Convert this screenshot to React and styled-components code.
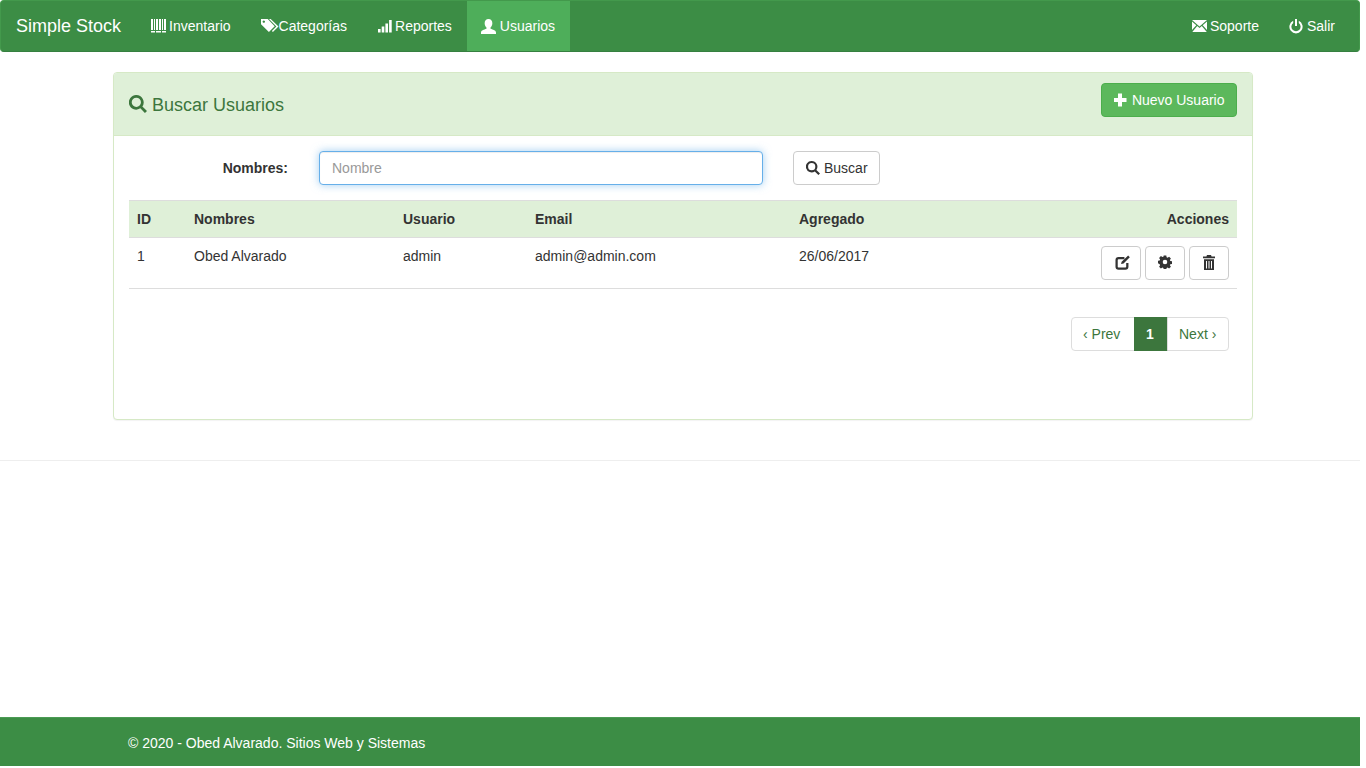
import React from "react";
import styled, { createGlobalStyle } from "styled-components";

const GlobalStyle = createGlobalStyle`
  html, body {
    margin: 0;
    background: #fff;
  }
  body {
    font-family: "Liberation Sans", Arial, sans-serif;
    font-size: 14px;
    line-height: 20px;
    color: #333;
  }
`;

const Svg = styled.svg`
  display: inline-block;
  flex: none;
  fill: currentColor;
  margin-left: ${(p) => p.$shift ?? 0}px;
`;

const Outline = styled.path`
  fill: none;
  stroke: currentColor;
  stroke-width: 2.1px;
`;

const IconBarcode = () => (
  <Svg width="15" height="16" viewBox="0 0 15 16">
    <path d="M0 1h2v11H0zM3 1h1v11H3zM5 1h2v11H5zM8 1h2v11H8zM11 1h1v11h-1zM13 1h2v11h-2zM0 13h4v1.500H0zM5 13h5v1.500H5zM11 13h4v1.500h-4z" />
  </Svg>
);

const IconTags = () => (
  <Svg width="18" height="16" viewBox="0 0 18 16">
    <path d="M0 1h6.700l7 7.200-5.800 5.800L0 6.300zM2.800 2.400a1.200 1.200 0 1 0 .01 0z" fillRule="evenodd" />
    <path d="M8 1h1.700l7.800 7.400-5.600 5.700-1-1 4.500-4.700z" />
  </Svg>
);

const IconSignal = () => (
  <Svg width="15" height="14" viewBox="-1 0 15 14">
    <path d="M0 10h2.600v3.500H0zM3.700 7.500h2.600v6H3.700zM7.400 4.500H10v9H7.400zM11.100 1h2.600v12.500h-2.600z" />
  </Svg>
);

const IconUser = () => (
  <Svg width="15" height="15" viewBox="0.5 0.5 14 14" $shift={-1}>
    <path d="M7.500 0.500c2.300 0 3.600 1.700 3.600 4 0 1.700-.8 3.200-1.700 4v1.200c2.300.8 5 1.600 5.100 3.300v1.500H.5V13c.1-1.700 2.800-2.500 5.100-3.300V8.500c-.9-.8-1.700-2.300-1.700-4 0-2.300 1.300-4 3.600-4z" />
  </Svg>
);

const IconMail = () => (
  <Svg width="15" height="15" viewBox="0 0 15 15">
    <path d="M0 1h15L7.500 7.500zM0 2.500l4.300 3.800L0 11zM15 2.500V11l-4.300-4.700zM5.200 7.100l2.300 2 2.300-2 5 6H.3z" />
  </Svg>
);

const IconOff = () => (
  <Svg width="14" height="15" viewBox="0 1 14 15">
    <path d="M6 1h2v7H6z" />
    <path d="M4.200 2.800v2.300a4.600 4.600 0 1 0 5.600 0V2.800a6.600 6.600 0 1 1-5.600 0z" />
  </Svg>
);

const IconSearch = ({ size = 14 }) => (
  <Svg width={size} height={size} viewBox="0 0 14 14">
    <path
      fillRule="evenodd"
      d="M5.700 0a5.700 5.700 0 0 1 4.700 8.900l3.600 3.500-1.600 1.600-3.600-3.600A5.700 5.700 0 1 1 5.700 0zm0 2.100a3.600 3.600 0 1 0 0 7.200 3.600 3.600 0 0 0 0-7.200z"
    />
  </Svg>
);

const IconPlus = () => (
  <Svg width="14" height="14" viewBox="1 0 14 14">
    <path d="M5 0.500h4V5h4.500v4H9v4.500H5V9H.5V5H5z" />
  </Svg>
);

const IconEdit = () => (
  <Svg width="15" height="15" viewBox="0 0 14 14" $shift={2}>
    <Outline d="M8.800 2.800H3.300c-1 0-1.800.8-1.800 1.800V11c0 1 .8 1.800 1.800 1.800h6.400c1 0 1.800-.8 1.800-1.800V7.500" />
    <path d="M12.300 0.500l1.500 1.500L8 8l-2.300.5.5-2.300z" />
  </Svg>
);

const IconCog = () => (
  <Svg width="14" height="14" viewBox="0 0 14 14">
    <path
      fillRule="evenodd"
      d="M5.700.5h2.600l.3 1.800 1 .4 1.500-1 1.800 1.800-1 1.500.4 1 1.800.3v2.600l-1.800.3-.4 1 1 1.500-1.800 1.800-1.500-1-1 .4-.3 1.800H5.700l-.3-1.800-1-.4-1.500 1-1.800-1.800 1-1.500-.4-1L0 8.300V5.700l1.700-.3.4-1-1-1.500 1.800-1.800 1.500 1 1-.4zM7 4.700a2.300 2.300 0 1 0 0 4.600 2.300 2.300 0 0 0 0-4.600z"
    />
  </Svg>
);

const IconTrash = () => (
  <Svg width="14" height="15" viewBox="0 0 14 15">
    <path d="M5 0h4l.6 1.500H13v1.800H1V1.500h3.400z" />
    <path
      fillRule="evenodd"
      d="M2 4.300h10V15H2zM4 6v7.500h1V6zM6.500 6v7.500h1V6zM9 6v7.500h1V6z"
    />
  </Svg>
);

const Page = styled.div`
  width: 1366px;
  min-height: 766px;
  display: flex;
  flex-direction: column;
`;

const Navbar = styled.nav`
  width: 1360px;
  box-sizing: border-box;
  height: 52px;
  display: flex;
  justify-content: space-between;
  background: #3c8d45;
  border: 1px solid #43994c;
  border-bottom-color: #368040;
  border-radius: 4px;
  padding-right: 9px;
`;

const NavGroup = styled.div`
  display: flex;
`;

const Brand = styled.a`
  padding: 0 15px;
  font-size: 18px;
  line-height: 50px;
  color: #fff;
`;

const NavItem = styled.a`
  display: flex;
  align-items: center;
  gap: ${(p) => p.$gap ?? 3}px;
  padding: 0 15px;
  height: 50px;
  font-size: 14px;
  color: #fff;
  background: ${(p) => (p.$active ? "#4eae5a" : "transparent")};
`;

const Container = styled.main`
  width: 1140px;
  margin: 20px auto 40px;
`;

const Panel = styled.section`
  box-sizing: border-box;
  height: 348px;
  background: #fff;
  border: 1px solid #d6e9c6;
  border-radius: 4px;
  box-shadow: 0 1px 1px rgba(0, 0, 0, 0.05);
`;

const PanelHeading = styled.header`
  height: 63px;
  box-sizing: border-box;
  display: flex;
  justify-content: space-between;
  padding: 10px 15px 0;
  background: #dff0d8;
  border-bottom: 1px solid #d6e9c6;
  border-radius: 3px 3px 0 0;
  color: #3c763d;
`;

const PanelTitle = styled.h4`
  display: flex;
  align-items: center;
  gap: 5px;
  margin: 0;
  height: 44px;
  font-size: 18px;
  font-weight: 400;
  line-height: 20px;
`;

const TitleIcon = styled.span`
  display: flex;
  margin-bottom: 2px;
`;

const Button = styled.button`
  display: inline-flex;
  align-items: center;
  gap: 4px;
  box-sizing: border-box;
  height: 34px;
  padding: 0 11.5px 0 12px;
  font: 14px/20px "Liberation Sans", Arial, sans-serif;
  color: #333;
  background: #fff;
  border: 1px solid #ccc;
  border-radius: 4px;
`;

const SuccessButton = styled(Button)`
  color: #fff;
  background: #5cb85c;
  border-color: #4cae4c;
`;

const ActionButton = styled(Button)`
  width: 40px;
  justify-content: center;
  padding: 0 0 2px;
`;

const PanelBody = styled.div`
  padding: 15px;
`;

const SearchForm = styled.form`
  display: flex;
  align-items: center;
  height: 34px;
  margin-bottom: 15px;
`;

const FieldLabel = styled.label`
  width: 159px;
  margin-right: 31px;
  text-align: right;
  font-weight: 700;
`;

const SearchInput = styled.input`
  box-sizing: border-box;
  width: 444px;
  height: 34px;
  margin-right: 30px;
  padding: 6px 12px;
  font: 14px/20px "Liberation Sans", Arial, sans-serif;
  color: #555;
  border: 1px solid #66afe9;
  border-radius: 4px;
  outline: 0;
  box-shadow: inset 0 1px 1px rgba(0, 0, 0, 0.075), 0 0 8px rgba(102, 175, 233, 0.6);
  &::placeholder {
    color: #999;
    opacity: 1;
  }
`;

const Table = styled.table`
  width: 100%;
  table-layout: fixed;
  border-collapse: collapse;
`;

const HeadCell = styled.th`
  box-sizing: border-box;
  width: ${(p) => (p.$width ? `${p.$width}px` : "auto")};
  height: 37px;
  padding: 8px;
  text-align: ${(p) => (p.$right ? "right" : "left")};
  font-weight: 700;
  background: #dff0d8;
  border-top: 1px solid #ddd;
  border-bottom: 1px solid #ddd;
`;

const Cell = styled.td`
  box-sizing: border-box;
  height: 51px;
  padding: 8px;
  vertical-align: top;
  text-align: ${(p) => (p.$right ? "right" : "left")};
  border-bottom: 1px solid #ddd;
`;

const Actions = styled.div`
  display: flex;
  justify-content: flex-end;
  gap: 4px;
`;

const Pager = styled.ul`
  display: flex;
  justify-content: flex-end;
  list-style: none;
  margin: 28px 8px 0 0;
  padding: 0;
`;

const PageLink = styled.li`
  box-sizing: border-box;
  width: ${(p) => p.$width}px;
  height: 34px;
  padding: 6px 11px;
  margin-left: -1px;
  white-space: nowrap;
  color: ${(p) => (p.$active ? "#fff" : "#3c763d")};
  font-weight: ${(p) => (p.$active ? 700 : 400)};
  background: ${(p) => (p.$active ? "#3c763d" : "#fff")};
  border: 1px solid ${(p) => (p.$active ? "#3c763d" : "#ddd")};
  &:first-child {
    border-radius: 4px 0 0 4px;
  }
  &:last-child {
    border-radius: 0 4px 4px 0;
  }
`;

const Divider = styled.hr`
  width: 1360px;
  height: 1px;
  margin: 0;
  border: 0;
  background: #eee;
`;

const Footer = styled.footer`
  width: 1360px;
  box-sizing: border-box;
  height: 49px;
  margin-top: auto;
  padding-left: 128px;
  line-height: 50px;
  color: #fff;
  background: #3c8d45;
  border-top: 1px solid #4b9b54;
`;

const columns = [
  { label: "ID", width: 57 },
  { label: "Nombres", width: 209 },
  { label: "Usuario", width: 132 },
  { label: "Email", width: 264 },
  { label: "Agregado", width: 240 },
];

export default function App() {
  return (
    <Page>
      <GlobalStyle />
      <Navbar>
        <NavGroup>
          <Brand>Simple Stock</Brand>
          <NavItem>
            <IconBarcode />
            Inventario
          </NavItem>
          <NavItem $gap={0}>
            <IconTags />
            Categorías
          </NavItem>
          <NavItem>
            <IconSignal />
            Reportes
          </NavItem>
          <NavItem $active $gap={4}>
            <IconUser />
            Usuarios
          </NavItem>
        </NavGroup>
        <NavGroup>
          <NavItem>
            <IconMail />
            Soporte
          </NavItem>
          <NavItem $gap={4}>
            <IconOff />
            Salir
          </NavItem>
        </NavGroup>
      </Navbar>

      <Container>
        <Panel>
          <PanelHeading>
            <PanelTitle>
              <TitleIcon>
                <IconSearch size={18} />
              </TitleIcon>
              Buscar Usuarios
            </PanelTitle>
            <SuccessButton type="button">
              <IconPlus />
              Nuevo Usuario
            </SuccessButton>
          </PanelHeading>
          <PanelBody>
            <SearchForm>
              <FieldLabel>Nombres:</FieldLabel>
              <SearchInput placeholder="Nombre" readOnly />
              <Button type="button">
                <IconSearch />
                Buscar
              </Button>
            </SearchForm>
            <Table>
              <thead>
                <tr>
                  {columns.map((col) => (
                    <HeadCell key={col.label} $width={col.width}>
                      {col.label}
                    </HeadCell>
                  ))}
                  <HeadCell $right>Acciones</HeadCell>
                </tr>
              </thead>
              <tbody>
                <tr>
                  <Cell>1</Cell>
                  <Cell>Obed Alvarado</Cell>
                  <Cell>admin</Cell>
                  <Cell>admin@admin.com</Cell>
                  <Cell>26/06/2017</Cell>
                  <Cell $right>
                    <Actions>
                      <ActionButton type="button">
                        <IconEdit />
                      </ActionButton>
                      <ActionButton type="button">
                        <IconCog />
                      </ActionButton>
                      <ActionButton type="button">
                        <IconTrash />
                      </ActionButton>
                    </Actions>
                  </Cell>
                </tr>
              </tbody>
            </Table>
            <Pager>
              <PageLink $width={64}>‹ Prev</PageLink>
              <PageLink $active $width={34}>1</PageLink>
              <PageLink $width={62}>Next ›</PageLink>
            </Pager>
          </PanelBody>
        </Panel>
      </Container>
      <Divider />
      <Footer>© 2020 - Obed Alvarado. Sitios Web y Sistemas</Footer>
    </Page>
  );
}
